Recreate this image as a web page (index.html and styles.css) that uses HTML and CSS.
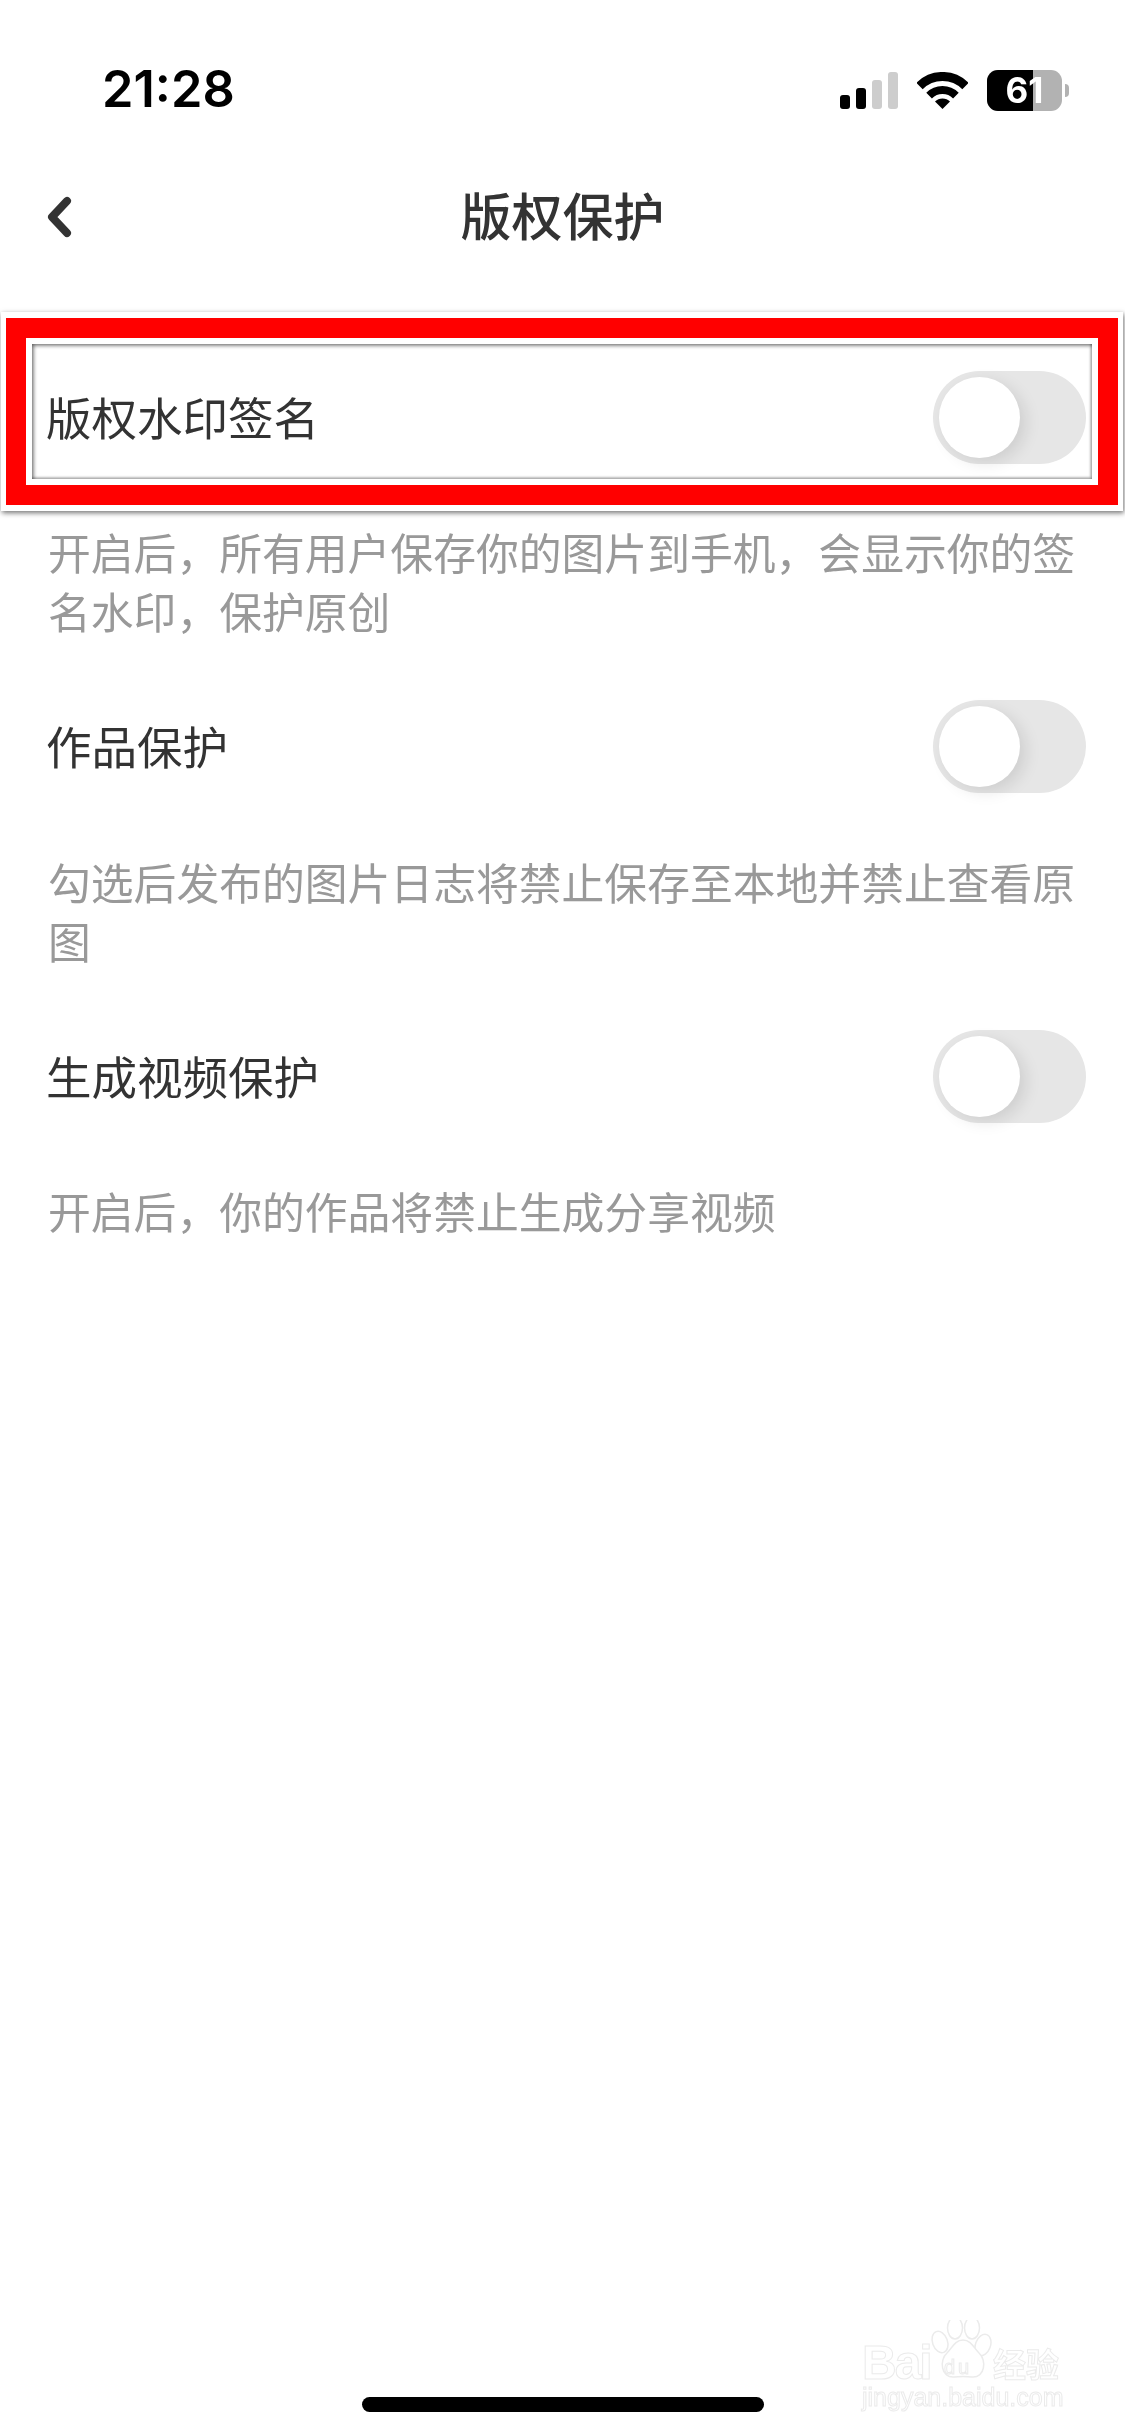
FILE: index.html
```html
<!DOCTYPE html>
<html lang="zh-CN">
<head>
<meta charset="utf-8">
<title>版权保护</title>
<link rel="stylesheet" href="styles.css">
</head>
<body>
<div class="screen">
  <header class="status">
    <span class="time">21:28</span>
    <div class="status-icons">
      <div class="signal">
        <i class="bar b1"></i><i class="bar b2"></i><i class="bar b3 dim"></i><i class="bar b4 dim"></i>
      </div>
      <svg class="wifi" width="51" height="37" viewBox="0 0 51 37">
        <path d="M2.5 14A32.5 32.5 0 0 1 48.5 14" fill="none" stroke="#000" stroke-width="9"/>
        <path d="M12.1 23.6A19 19 0 0 1 38.9 23.6" fill="none" stroke="#000" stroke-width="8"/>
        <path d="M25.5 37L18 29.5A10.6 10.6 0 0 1 33 29.5Z" fill="#000"/>
      </svg>
      <div class="battery">
        <div class="batt-body"><div class="batt-fill"></div><span class="batt-num">61</span></div>
        <i class="batt-nub"></i>
      </div>
    </div>
  </header>

  <nav class="nav">
    <svg class="back" width="30" height="48" viewBox="0 0 30 48">
      <path d="M22 8L7 24L22 40" fill="none" stroke="#333" stroke-width="8" stroke-linecap="round" stroke-linejoin="round"/>
    </svg>
    <h1 class="title">版权保护</h1>
  </nav>

  <main class="list">
    <section class="item">
      <div class="row"><span class="label">版权水印签名</span><div class="switch"><i class="knob"></i></div></div>
      <p class="desc">开启后，所有用户保存你的图片到手机，会显示你的签名水印，保护原创</p>
    </section>
    <section class="item">
      <div class="row"><span class="label">作品保护</span><div class="switch"><i class="knob"></i></div></div>
      <p class="desc">勾选后发布的图片日志将禁止保存至本地并禁止查看原图</p>
    </section>
    <section class="item">
      <div class="row"><span class="label">生成视频保护</span><div class="switch"><i class="knob"></i></div></div>
      <p class="desc">开启后，你的作品将禁止生成分享视频</p>
    </section>
  </main>

  <div class="callout"><div class="callout-red"><div class="callout-inner"></div></div></div>

  <div class="home-bar"></div>

  <div class="watermark">
    <div class="wm-top">
      <span class="wm-bai">Bai</span>
      <span class="wm-paw">
        <svg class="paw" width="62" height="60" viewBox="0 0 62 60">
          <g fill="#fff" stroke="#ebebeb" stroke-width="1.5">
            <ellipse cx="10" cy="22" rx="7.500" ry="11" transform="rotate(-20 10 22)"/>
            <ellipse cx="25" cy="8" rx="7.500" ry="11"/>
            <ellipse cx="42" cy="8" rx="7.500" ry="11"/>
            <ellipse cx="53" cy="25" rx="7.500" ry="11" transform="rotate(20 53 25)"/>
            <path d="M33 20C41 20 44 28 49 33C57 40 55 58 42 57C37 56.500 29 56.500 24 57C11 58 9 40 17 33C22 28 25 20 33 20Z"/>
          </g>
        </svg>
        <span class="wm-du">du</span>
      </span>
      <span class="wm-cn">经验</span>
    </div>
    <div class="wm-url">jingyan.baidu.com</div>
  </div>
</div>
</body>
</html>
```

FILE: styles.css
```css
* { box-sizing: border-box; }
html, body { margin: 0; padding: 0; background: #fff; }
body {
  width: 1125px;
  height: 2436px;
  overflow: hidden;
  font-family: "Noto Sans CJK SC", "Noto Sans", sans-serif;
}
.screen { position: relative; width: 1125px; height: 2436px; background: #fff; overflow: hidden; }

/* status bar */
.status {
  height: 150px;
  padding: 63px 56px 0 102px;
  display: flex;
  justify-content: space-between;
  align-items: flex-start;
}
.time { font-family: Inter, "Liberation Sans", sans-serif; font-weight: 600; font-size: 50.500px; line-height: 52px; color: #000; }
.status-icons { display: flex; align-items: flex-end; margin-top: 7px; }
.signal { display: flex; align-items: flex-end; gap: 6px; height: 37px; margin-right: 19px; }
.bar { display: block; width: 10px; background: #000; border-radius: 3px; }
.b1 { height: 14px; }
.b2 { height: 21px; }
.b3 { height: 29px; }
.b4 { height: 37px; }
.dim { background: #cdcdcd; }
.wifi { display: block; margin-right: 19px; }
.battery { display: flex; align-items: center; margin-bottom: -2px; }
.batt-body { position: relative; width: 75px; height: 41px; border-radius: 11px; background: #b2b2b2; overflow: hidden; }
.batt-fill { width: 46px; height: 100%; background: #000; }
.batt-num { position: absolute; left: 0; right: 0; top: 0; text-align: center; font-family: Inter, "Liberation Sans", sans-serif; font-weight: 700; font-size: 35px; line-height: 41px; color: #fff; }
.batt-nub { display: block; width: 4px; height: 13px; margin-left: 3px; background: #b2b2b2; border-radius: 0 4px 4px 0; }

/* navigation */
.nav { position: relative; height: 134px; display: flex; align-items: center; justify-content: center; }
.back { position: absolute; left: 45px; top: 43px; display: block; }
.title { margin: -6px 0 0; font-size: 51px; font-weight: 500; color: #333; line-height: 68px; }

/* list */
.list { padding-top: 63px; }
.item { padding-bottom: 36.500px; }
.row { height: 140px; padding: 0 39px 0 46px; display: flex; align-items: center; justify-content: space-between; }
.label { font-size: 45.500px; line-height: 60px; color: #333; margin-top: -3px; }
.switch { position: relative; width: 153px; height: 93px; border-radius: 47px; background: #e6e6e6; }
.knob {
  position: absolute; left: 6px; top: 6px;
  width: 81px; height: 81px; border-radius: 50%;
  background: #fff;
  box-shadow: 6px 5px 16px rgba(0,0,0,.10);
}
.desc { margin: 0; padding: 35px 46px 0 48px; font-size: 42.800px; line-height: 59px; color: #999; }

/* red annotation on top of first row */
.callout {
  position: absolute; left: 1px; top: 312px; width: 1122px; height: 199px;
  background: #fff; padding: 6px 5px;
  box-shadow: 1px 2px 5px rgba(0,0,0,.55);
  pointer-events: none;
  mix-blend-mode: multiply;
}
.callout-red { height: 100%; border: 20px solid #f00; padding: 6px; background: #fff; }
.callout-inner { height: 100%; box-shadow: inset 1px 1px 4px rgba(0,0,0,.7), inset -2px -2px 2px rgba(0,0,0,.15); }

/* home indicator */
.home-bar { position: absolute; left: 362px; top: 2397px; width: 402px; height: 15px; border-radius: 8px; background: #000; }

/* watermark */
.watermark { position: absolute; left: 862px; top: 2318px; width: 210px; font-family: "Liberation Sans", sans-serif; }
.wm-top { display: flex; align-items: flex-end; height: 67px; }
.wm-bai, .wm-du, .wm-cn, .wm-url { -webkit-text-stroke: 1px #ebebeb; color: #fff; }
.wm-bai { font-size: 48px; font-weight: 700; line-height: 44px; letter-spacing: -2px; width: 68px; flex: none; }
.wm-paw { position: relative; width: 63px; height: 67px; flex: none; }
.paw { position: absolute; left: 0; top: 2px; }
.wm-du { position: absolute; left: 14px; top: 37px; font-size: 20px; line-height: 24px; letter-spacing: 3px; }
.wm-cn { font-family: "Noto Sans CJK SC", sans-serif; font-weight: 700; font-size: 33px; line-height: 44px; white-space: nowrap; }
.wm-url { margin-top: -4px; font-size: 25px; line-height: 32px; white-space: nowrap; }
```
